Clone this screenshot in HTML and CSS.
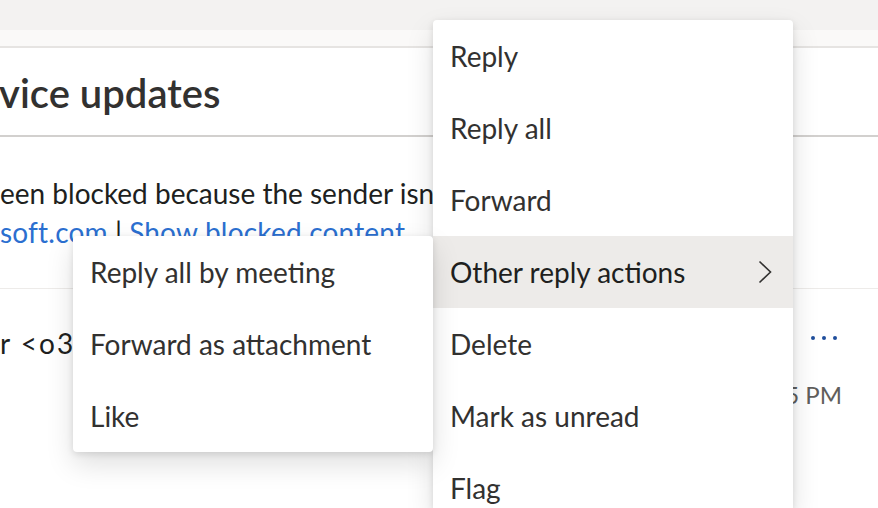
FILE: index.html
```html
<!DOCTYPE html>
<html>
<head>
<meta charset="utf-8">
<link rel="stylesheet" href="styles.css">
</head>
<body>
<div class="page">
  <div class="topbar"></div>
  <div class="band"></div>
  <div class="subject"><h1 class="title">vice updates</h1></div>
  <div class="notice">
    <p class="notice-line">een blocked because the sender isn't in your Safe senders list.</p>
    <p class="notice-line links"><a class="link">soft.com</a> <span class="pipe">|</span> <a class="link">Show blocked content</a></p>
  </div>
  <div class="sender">
    <div class="sender-main">
      <div class="from">r &lt;o365mc@microsoft.com&gt;</div>
    </div>
    <div class="sender-side">
      <div class="more"><span class="dot"></span><span class="dot"></span><span class="dot"></span></div>
      <div class="time">Tue 4/9/2024 6:45 PM</div>
    </div>
  </div>
</div>

<div class="menu main-menu">
  <div class="item">Reply</div>
  <div class="item">Reply all</div>
  <div class="item">Forward</div>
  <div class="item active">Other reply actions
    <svg class="chev" width="14" height="24" viewBox="0 0 14 24"><path d="M1.5 1.5 L12.5 12 L1.5 22.5" fill="none" stroke="#323130" stroke-width="1.6"/></svg>
  </div>
  <div class="item">Delete</div>
  <div class="item">Mark as unread</div>
  <div class="item">Flag</div>
</div>

<div class="menu sub-menu">
  <div class="item">Reply all by meeting</div>
  <div class="item">Forward as attachment</div>
  <div class="item">Like</div>
</div>
</body>
</html>
```

FILE: styles.css
```css
html, body {
  margin: 0;
  padding: 0;
  overflow: hidden;
}
body {
  width: 878px;
  height: 508px;
  background: #ffffff;
  font-family: "Lato", "Open Sans", sans-serif;
  color: #201f1e;
  position: relative;
}
.page {
  display: flex;
  flex-direction: column;
  height: 508px;
  overflow: hidden;
}
.topbar {
  height: 30px;
  flex: none;
  background: #f3f2f1;
}
.band {
  height: 16px;
  flex: none;
  background: #faf9f8;
  border-bottom: 2px solid #e6e4e2;
}
.subject {
  height: 87px;
  flex: none;
  border-bottom: 2px solid #d2d0ce;
  display: flex;
  align-items: center;
}
.title {
  margin: 3px 0 0 -1px;
  font-size: 40px;
  font-weight: 600;
  color: #323130;
  white-space: nowrap;
  line-height: 48px;
}
.notice {
  height: 152px;
  flex: none;
  border-bottom: 1px solid #edebe9;
  box-sizing: border-box;
}
.notice-line {
  margin: 0;
  font-size: 28px;
  line-height: 39px;
  white-space: nowrap;
  color: #201f1e;
}
.notice-line:first-child {
  margin-top: 37px;
}
.link {
  color: #2b6fd0;
  letter-spacing: 0.2px;
}
.pipe {
  color: #201f1e;
}
.sender {
  display: flex;
  justify-content: space-between;
}
.from {
  font-size: 28px;
  line-height: 40px;
  margin-top: 34px;
  white-space: nowrap;
  letter-spacing: 2px;
}
.sender-side {
  display: flex;
  flex-direction: column;
  align-items: flex-end;
  padding-right: 36px;
}
.more {
  display: flex;
  gap: 7px;
  margin-top: 47px;
  margin-right: 5px;
}
.dot {
  width: 4px;
  height: 4px;
  border-radius: 50%;
  background: #1f4e9c;
}
.time {
  font-size: 24px;
  color: #605e5c;
  margin-top: 40px;
  white-space: nowrap;
}

.menu {
  position: absolute;
  width: 360px;
  background: #ffffff;
  border-radius: 4px;
  box-shadow: 0 12px 28px rgba(0,0,0,0.13), 0 2px 7px rgba(0,0,0,0.11);
  display: flex;
  flex-direction: column;
  overflow: hidden;
}
.main-menu {
  left: 433px;
  top: 20px;
  height: 488px;
  border-radius: 4px 4px 0 0;
}
.sub-menu {
  left: 73px;
  top: 236px;
  z-index: 2;
}
.item {
  height: 72px;
  flex: none;
  display: flex;
  align-items: center;
  padding: 0 21px 0 17px;
  font-size: 28px;
  color: #323130;
  white-space: nowrap;
}
.item.active {
  background: #edebe9;
  color: #201f1e;
  justify-content: space-between;
}
.chev {
  display: block;
}
```
